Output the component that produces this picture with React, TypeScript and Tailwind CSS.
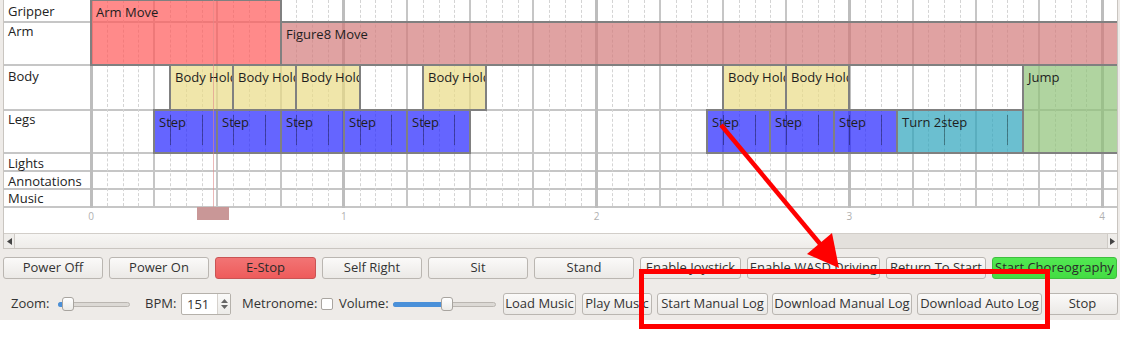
const PX = 252.8;
const cx = (t: number) => 1 + t * PX;

const rowLabels = [
  { name: "Gripper", cls: "h-[23px] pt-[3px]" },
  { name: "Arm", cls: "h-[43px] pt-0" },
  { name: "Body", cls: "h-[45px] pt-[2px]" },
  { name: "Legs", cls: "h-[43px] pt-0" },
  { name: "Lights", cls: "h-[18px] pt-[1px]" },
  { name: "Annotations", cls: "h-[18px] pt-[1px]" },
  { name: "Music", cls: "h-[18px] pt-0" },
];

const hLines = [21, 64, 109, 152, 170, 188, 206];

type Block = {
  label: string;
  t0: number;
  t1: number;
  top: number;
  bottom: number;
  bg: string;
  marks?: number[];
};

const END = 4.2;

const blocks: Block[] = [
  { label: "Arm Move", t0: 0, t1: 0.75, top: -1, bottom: 66, bg: "bg-[#ff5858]/70" },
  { label: "Figure8 Move", t0: 0.75, t1: END, top: 21, bottom: 66, bg: "bg-[#d37a7a]/70" },
  { label: "Body Hold", t0: 0.3125, t1: 0.5625, top: 64, bottom: 111, bg: "bg-[#eadb86]/70" },
  { label: "Body Hold", t0: 0.5625, t1: 0.8125, top: 64, bottom: 111, bg: "bg-[#eadb86]/70" },
  { label: "Body Hold", t0: 0.8125, t1: 1.0625, top: 64, bottom: 111, bg: "bg-[#eadb86]/70" },
  { label: "Body Hold", t0: 1.3125, t1: 1.5625, top: 64, bottom: 111, bg: "bg-[#eadb86]/70" },
  { label: "Body Hold", t0: 2.5, t1: 2.75, top: 64, bottom: 111, bg: "bg-[#eadb86]/70" },
  { label: "Body Hold", t0: 2.75, t1: 3.0, top: 64, bottom: 111, bg: "bg-[#eadb86]/70" },
  { label: "Jump", t0: 3.6875, t1: END, top: 64, bottom: 154, bg: "bg-[#8ec277]/70" },
  { label: "Step", t0: 0.25, t1: 0.5, top: 109, bottom: 154, bg: "bg-[#2424ff]/70", marks: [1 / 16, 3 / 16] },
  { label: "Step", t0: 0.5, t1: 0.75, top: 109, bottom: 154, bg: "bg-[#2424ff]/70", marks: [1 / 16, 3 / 16] },
  { label: "Step", t0: 0.75, t1: 1.0, top: 109, bottom: 154, bg: "bg-[#2424ff]/70", marks: [1 / 16, 3 / 16] },
  { label: "Step", t0: 1.0, t1: 1.25, top: 109, bottom: 154, bg: "bg-[#2424ff]/70", marks: [1 / 16, 3 / 16] },
  { label: "Step", t0: 1.25, t1: 1.5, top: 109, bottom: 154, bg: "bg-[#2424ff]/70", marks: [1 / 16, 3 / 16] },
  { label: "Step", t0: 2.4375, t1: 2.6875, top: 109, bottom: 154, bg: "bg-[#2424ff]/70", marks: [1 / 16, 3 / 16] },
  { label: "Step", t0: 2.6875, t1: 2.9375, top: 109, bottom: 154, bg: "bg-[#2424ff]/70", marks: [1 / 16, 3 / 16] },
  { label: "Step", t0: 2.9375, t1: 3.1875, top: 109, bottom: 154, bg: "bg-[#2424ff]/70", marks: [1 / 16, 3 / 16] },
  { label: "Turn 2step", t0: 3.1875, t1: 3.6875, top: 109, bottom: 154, bg: "bg-[#2ca4bc]/70", marks: [3 / 16, 7 / 16] },
];

const row1 = [
  { label: "Power Off", w: "w-[100px]" },
  { label: "Power On", w: "w-[100px]" },
  { label: "E-Stop", w: "w-[101px]", tone: "red" },
  { label: "Self Right", w: "w-[100px]" },
  { label: "Sit", w: "w-[100px]" },
  { label: "Stand", w: "w-[100px]" },
  { label: "Enable Joystick", w: "w-[101px]" },
  { label: "Enable WASD Driving", w: "w-[133px]" },
  { label: "Return To Start", w: "w-[100px]" },
  { label: "Start Choreography", w: "w-[125px]", tone: "green" },
];

function Btn({ label, className, tone }: { label: string; className: string; tone?: string }) {
  let look = "border-[#bab6b1] from-[#fbfaf9] to-[#ebe9e6] text-[#333]";
  if (tone === "red") look = "border-[#c95454] from-[#f27474] to-[#ee5b5b] text-[#2a2a2a]";
  if (tone === "green") look = "border-[#3fbf3f] from-[#52e852] to-[#43dd43] text-[#2a2a2a]";
  return (
    <button
      className={`h-[22px] shrink-0 rounded-[3px] border bg-linear-to-b pb-[2px] text-[13px] leading-none whitespace-nowrap overflow-hidden ${look} ${className}`}
    >
      {label}
    </button>
  );
}

function Timeline() {
  return (
    <div className="ml-[3px] w-[1115px] border-x border-b border-[#c9c5c0] bg-white">
      <div className="flex h-[208px]">
        <div className="w-[86px] shrink-0 flex flex-col">
          {rowLabels.map((r) => (
            <div
              key={r.name}
              className={`${r.cls} pl-[4px] border-b-2 border-[#c6c6c6] text-[13px] leading-[16px] text-[#222]`}
            >
              {r.name}
            </div>
          ))}
        </div>
        <div className="relative w-[1027px] h-[208px] overflow-hidden">
          {hLines.map((y) => (
            <div key={y} className="absolute left-0 right-0 h-[2px] bg-[#c6c6c6]" style={{ top: y }} />
          ))}
          {Array.from({ length: 66 }, (_, k) => {
            const x = cx(k / 16);
            if (k % 16 === 0)
              return (
                <div
                  key={k}
                  className="absolute top-0 h-[208px] w-[3px] bg-[#bdbdbd]"
                  style={{ left: Math.round(x - 1.5) }}
                />
              );
            if (k % 4 === 0)
              return (
                <div
                  key={k}
                  className="absolute top-0 h-[206px] w-[2px] bg-[#c6c6c6]"
                  style={{ left: Math.round(x - 1) }}
                />
              );
            return (
              <div
                key={k}
                className="absolute top-0 h-[206px] border-l border-dashed border-[#d4d4d4]"
                style={{ left: Math.round(x) }}
              />
            );
          })}
          {blocks.map((b, i) => {
            const left = Math.round(cx(b.t0)) - 1;
            const right = Math.round(cx(b.t1)) + 1;
            return (
              <div
                key={i}
                className={`absolute border-2 border-[#808080] ${b.bg} overflow-hidden`}
                style={{ left, width: right - left, top: b.top, height: b.bottom - b.top }}
              >
                <div className="pl-[4px] pt-[3px] text-[13px] leading-[16px] text-[#1e1e1e] whitespace-nowrap">
                  {b.label}
                </div>
                {b.marks?.map((m) => (
                  <div
                    key={m}
                    className="absolute top-[4px] h-[30px] w-px bg-[#000]/35"
                    style={{ left: Math.round(cx(b.t0 + m)) - left - 2 }}
                  />
                ))}
              </div>
            );
          })}
          <div className="absolute top-0 left-[123px] h-[208px] w-px bg-[#e08a8a]/60" />
        </div>
      </div>
      <div className="relative h-[25px]">
        <div className="absolute top-[-1px] left-[193px] h-[13px] w-[32px] bg-[#c99797]" />
        {[0, 1, 2, 3, 4].map((n) => (
          <span
            key={n}
            className="absolute top-[1px] -translate-x-1/2 text-[10px] leading-[14px] text-[#b0b0b0]"
            style={{ left: 87 + n * PX }}
          >
            {n}
          </span>
        ))}
      </div>
      <div className="flex h-[15px] border-t border-[#d2cec9] bg-[#e3e0dc]">
        <div className="w-[11px] flex items-center justify-center border-r border-[#cfcbc6] bg-[#efedea]">
          <svg width="5" height="7" viewBox="0 0 5 7">
            <polygon points="5,0 0,3.5 5,7" fill="#444" />
          </svg>
        </div>
        <div className="w-[817px] border-r border-[#c6c2bd] bg-linear-to-b from-[#f7f6f4] to-[#eeece9]" />
        <div className="flex-1" />
        <div className="w-[10px] flex items-center justify-center border-l border-[#cfcbc6] bg-[#efedea]">
          <svg width="5" height="7" viewBox="0 0 5 7">
            <polygon points="0,0 5,3.5 0,7" fill="#444" />
          </svg>
        </div>
      </div>
    </div>
  );
}

function Slider({ w, fill, handle }: { w: string; fill: string; handle: string }) {
  return (
    <div className={`relative h-[14px] shrink-0 ${w}`}>
      <div className="absolute left-0 right-0 top-[5px] h-[5px] rounded-full border border-[#bab6b1] bg-[#dcd9d5]" />
      <div className={`absolute left-0 top-[5px] h-[5px] rounded-full bg-[#4a90d9] ${fill}`} />
      <div
        className={`absolute top-0 h-[14px] w-[12px] rounded-[3px] border border-[#a8a49f] bg-linear-to-b from-white to-[#ecebe8] ${handle}`}
      />
    </div>
  );
}

export default function App() {
  return (
    <div className="relative w-[1124px] h-[338px] bg-white font-['Open_Sans',sans-serif] overflow-hidden">
      <div className="w-[1120px] h-[320px] bg-[#eeebe8] flex flex-col">
        <Timeline />
        <div className="mt-[8px] ml-[3px] flex gap-[6px]">
          {row1.map((b) => (
            <Btn key={b.label} label={b.label} className={b.w} tone={b.tone} />
          ))}
        </div>
        <div className="mt-[14px] flex items-center h-[22px] text-[13px] text-[#333]">
          <span className="ml-[11px] w-[47px] shrink-0">Zoom:</span>
          <Slider w="w-[72px]" fill="w-[6px]" handle="left-[4px]" />
          <span className="ml-[15px] w-[36px] shrink-0">BPM:</span>
          <div className="flex h-[22px] w-[50px] shrink-0 rounded-[2px] border border-[#b5b1ab] bg-white">
            <span className="flex-1 pl-[5px] leading-[20px]">151</span>
            <div className="w-[13px] flex flex-col items-center justify-center gap-[2px] border-l border-[#d6d2cd] bg-linear-to-b from-[#fafaf9] to-[#ecebe8]">
              <svg width="7" height="4" viewBox="0 0 7 4">
                <polygon points="0,4 3.5,0 7,4" fill="#666" />
              </svg>
              <svg width="7" height="4" viewBox="0 0 7 4">
                <polygon points="0,0 7,0 3.5,4" fill="#666" />
              </svg>
            </div>
          </div>
          <span className="ml-[11px] w-[79px] shrink-0">Metronome:</span>
          <div className="h-[12px] w-[12px] shrink-0 rounded-[2px] border border-[#a9a5a0] bg-white" />
          <span className="ml-[6px] w-[54px] shrink-0">Volume:</span>
          <Slider w="w-[103px]" fill="w-[52px]" handle="left-[48px]" />
          <Btn label="Load Music" className="ml-[7px] w-[73px]" />
          <Btn label="Play Music" className="ml-[6px] w-[70px]" />
          <Btn label="Start Manual Log" className="ml-[5px] w-[111px]" />
          <Btn label="Download Manual Log" className="ml-[4px] w-[140px]" />
          <Btn label="Download Auto Log" className="ml-[5px] w-[125px]" />
          <Btn label="Stop" className="ml-[5px] w-[71px]" />
        </div>
      </div>
      <svg className="absolute left-0 top-0 pointer-events-none" width="1124" height="338" viewBox="0 0 1124 338">
        <line x1="721" y1="125" x2="826" y2="251" stroke="#ff0000" strokeWidth="4.5" />
        <polygon points="839,268 807,254 832,233" fill="#ff0000" />
        <rect x="641.5" y="271.5" width="406" height="55" fill="none" stroke="#ff0000" strokeWidth="5" />
      </svg>
    </div>
  );
}
